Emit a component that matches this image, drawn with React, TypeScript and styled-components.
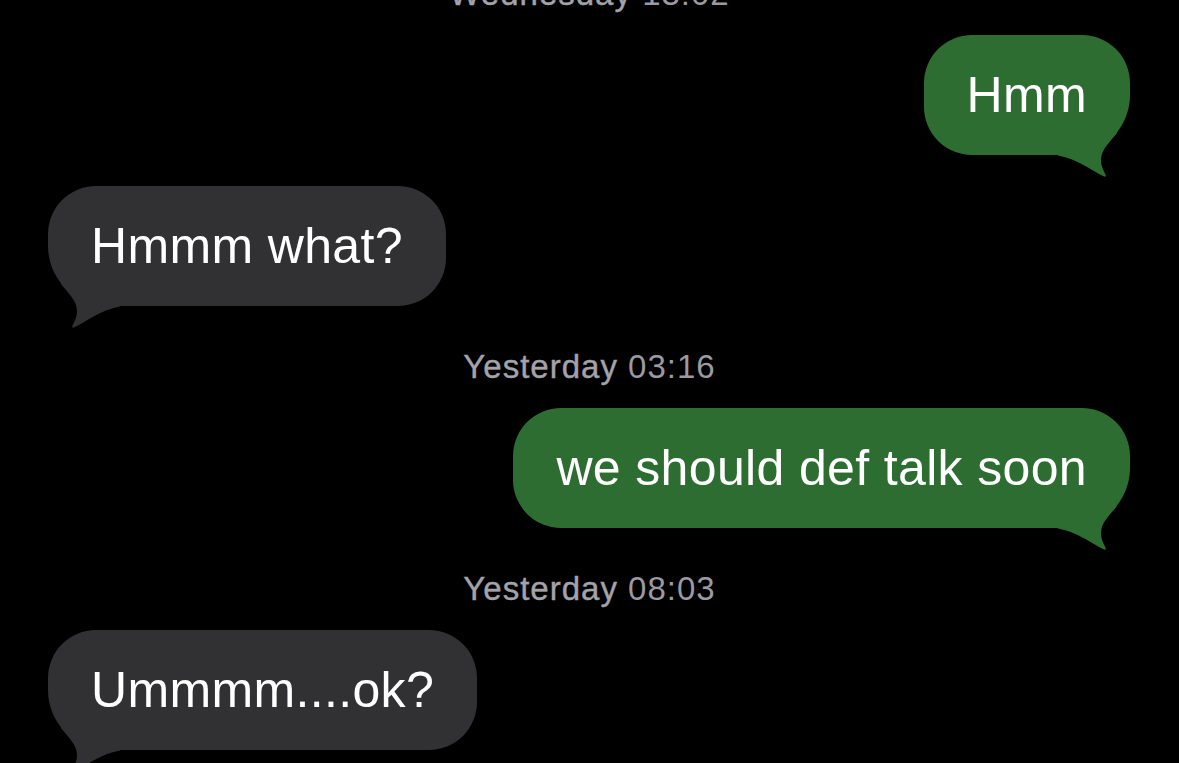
import React from "react";
import styled, { createGlobalStyle } from "styled-components";

const GlobalStyle = createGlobalStyle`
  html, body {
    margin: 0;
    padding: 0;
    background: #000;
  }
  body {
    font-family: "Liberation Sans", Arial, sans-serif;
  }
`;

const Screen = styled.div`
  width: 1179px;
  height: 763px;
  overflow: hidden;
  background: #000;
  display: flex;
  flex-direction: column;
`;

const Thread = styled.div`
  display: flex;
  flex-direction: column;
  margin-top: -67px;
`;

const Timestamp = styled.div`
  margin: 41px 0 21px;
  text-align: center;
  font-size: 33px;
  line-height: 40px;
  letter-spacing: 1px;
  color: #9a9aa0;
  white-space: nowrap;
`;

const Day = styled.span`
  color: #a3a3a9;
  -webkit-text-stroke: 0.4px #a3a3a9;
`;

const Row = styled.div<{ $out: boolean }>`
  display: flex;
  justify-content: ${(p) => (p.$out ? "flex-end" : "flex-start")};
  padding: 0 49px 0 48px;

  & + & {
    margin-top: 31px;
  }
`;

const Bubble = styled.div<{ $out: boolean }>`
  position: relative;
  padding: 30px 43px;
  font-size: 50px;
  line-height: 60px;
  letter-spacing: 0.35px;
  color: #fff;
  white-space: nowrap;
  background: ${(p) => (p.$out ? "#2e6d31" : "#313133")};
  border-radius: 48px;
  ${(p) =>
    p.$out
      ? "border-bottom-right-radius: 60px;"
      : "border-bottom-left-radius: 60px;"}
`;

const Tail = styled.svg<{ $out: boolean }>`
  position: absolute;
  bottom: -22px;
  width: 72px;
  height: 80px;
  ${(p) => (p.$out ? "right: 0;" : "left: 0; transform: scaleX(-1);")}
`;

const TAIL_PATH =
  "M 59 36 C 53 44, 43 52, 43 63 C 43 70, 46 74, 47.5 77.5 Q 48.5 80.5, 45.5 79.3 C 34 74, 20 62, 0 58.5 L 0 20 L 45 20 Z";

type Msg =
  | { kind: "time"; day: string; time: string }
  | { kind: "msg"; out: boolean; text: string };

const messages: Msg[] = [
  { kind: "time", day: "Wednesday", time: "13:02" },
  { kind: "msg", out: true, text: "Hmm" },
  { kind: "msg", out: false, text: "Hmmm what?" },
  { kind: "time", day: "Yesterday", time: "03:16" },
  { kind: "msg", out: true, text: "we should def talk soon" },
  { kind: "time", day: "Yesterday", time: "08:03" },
  { kind: "msg", out: false, text: "Ummmm....ok?" },
];

const Message: React.FC<{ out: boolean; text: string }> = ({ out, text }) => {
  const color = out ? "#2e6d31" : "#313133";
  return (
    <Row $out={out}>
      <Bubble $out={out}>
        {text}
        <Tail $out={out} viewBox="0 0 72 80" aria-hidden="true">
          <path d={TAIL_PATH} fill={color} />
        </Tail>
      </Bubble>
    </Row>
  );
};

export default function App() {
  return (
    <>
      <GlobalStyle />
      <Screen>
        <Thread>
          {messages.map((m, i) =>
            m.kind === "time" ? (
              <Timestamp key={i}>
                <Day>{m.day}</Day> {m.time}
              </Timestamp>
            ) : (
              <Message key={i} out={m.out} text={m.text} />
            )
          )}
        </Thread>
      </Screen>
    </>
  );
}
